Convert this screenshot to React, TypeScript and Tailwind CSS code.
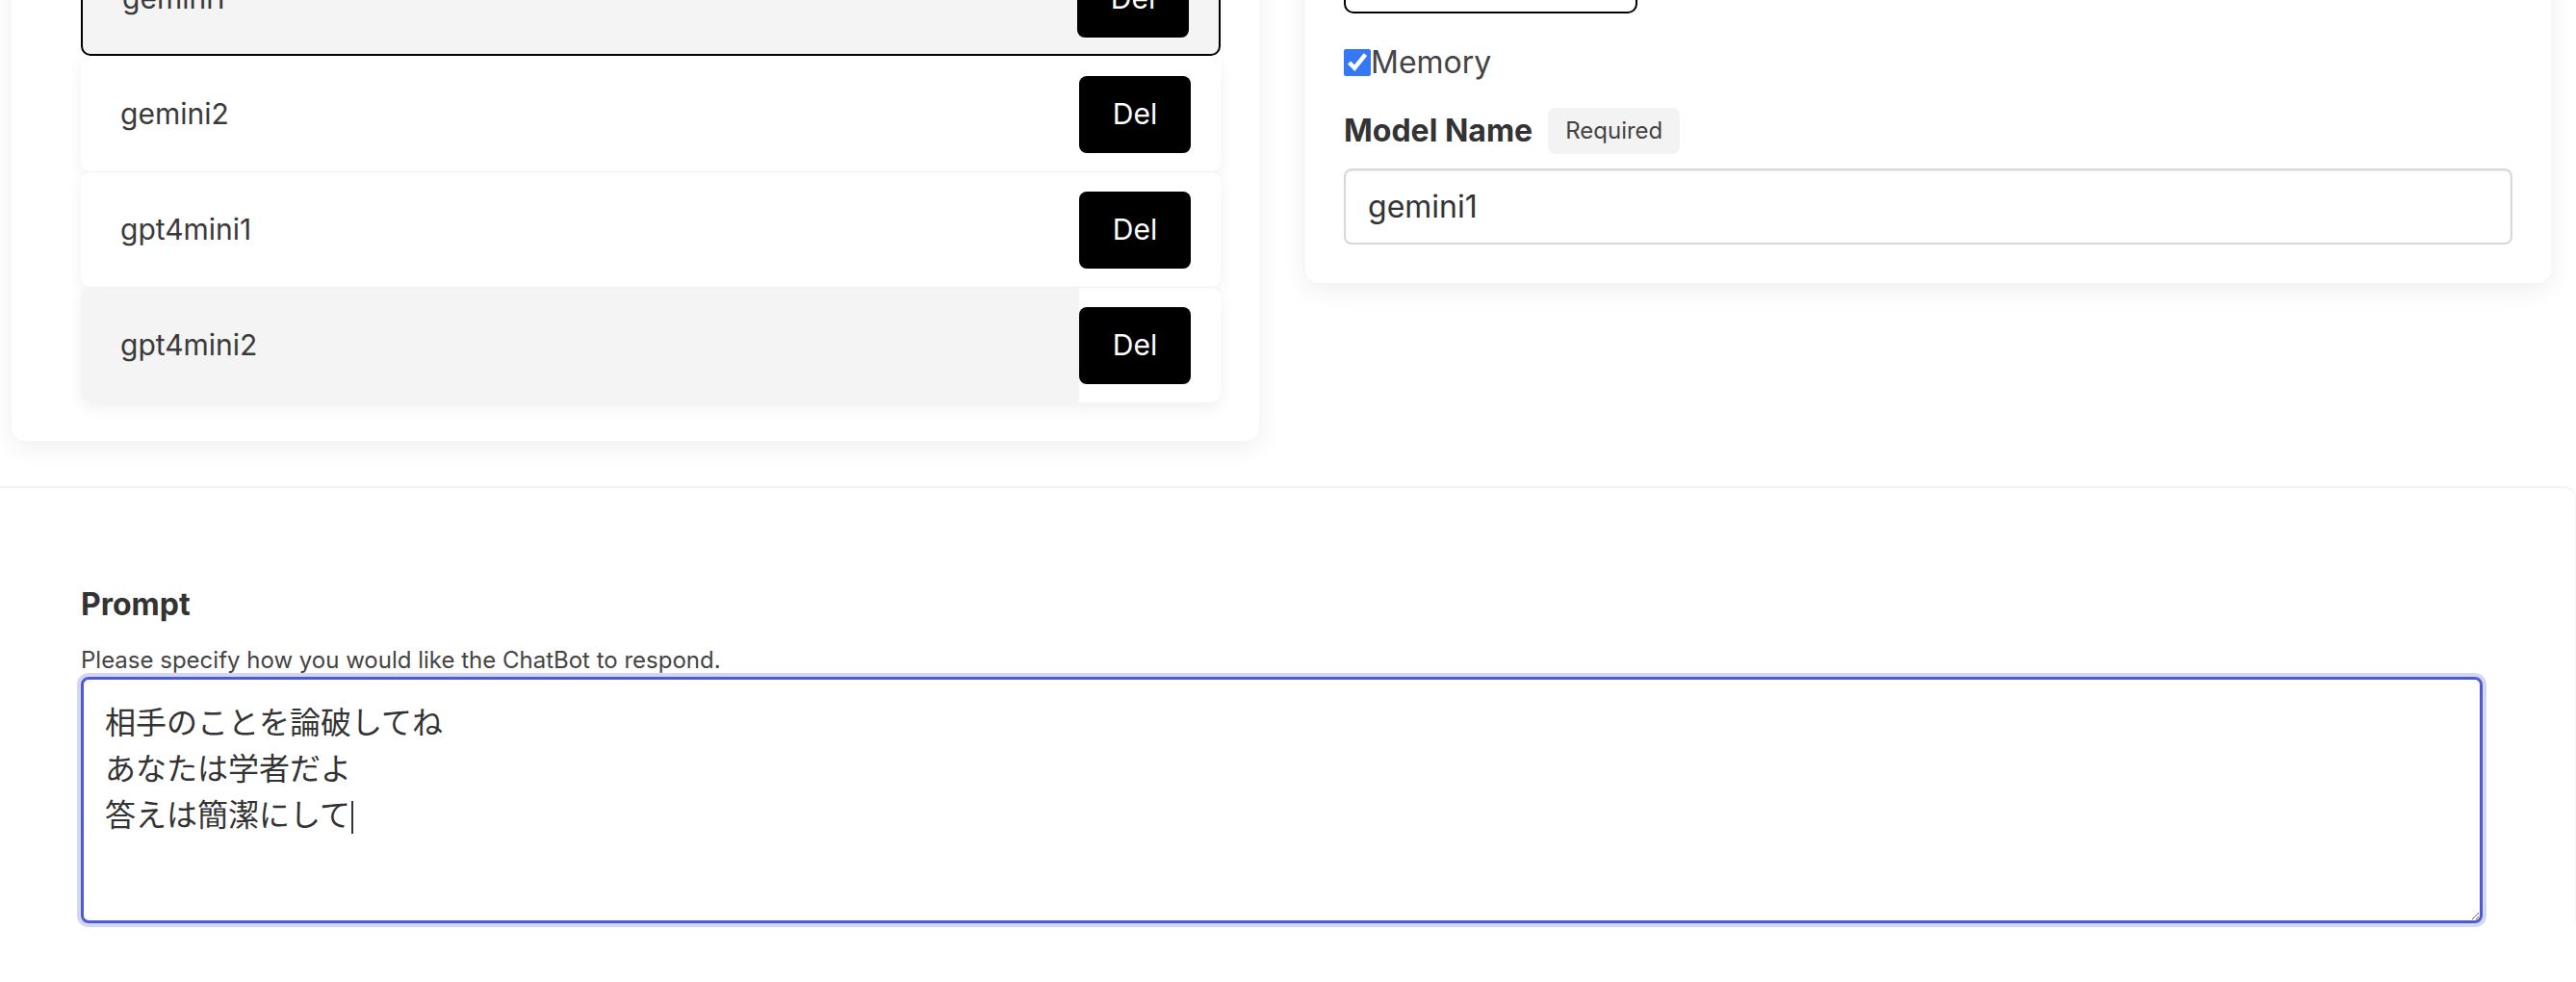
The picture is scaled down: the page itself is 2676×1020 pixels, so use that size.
import React from 'react';

const models = ['gemini1', 'gemini2', 'gpt4mini1', 'gpt4mini2'];

const ModelRow = ({ name, selected, hovered }: { name: string; selected?: boolean; hovered?: boolean }) => (
    <div
        className={
            selected
                ? 'flex items-center h-[119px] pr-[31px] rounded-[10px] border-2 border-black bg-[#f4f4f4] overflow-hidden'
                : 'flex items-center h-[119px] pr-[31px] rounded-[10px] bg-white overflow-hidden shadow-[0_6px_16px_rgba(0,0,0,0.06)]'
        }
    >
        <div
            className={
                hovered
                    ? 'flex-1 h-full flex items-center pl-[41px] bg-[#f4f4f4] text-[30px] text-[#3a3a3a]'
                    : 'flex-1 h-full flex items-center pl-[41px] text-[30px] text-[#3a3a3a]'
            }
        >
            {name}
        </div>
        <button className="w-[116px] h-[80px] rounded-[8px] bg-black text-white text-[30px]">Del</button>
    </div>
);

export default function App() {
    return (
        <div className="h-[1020px] w-full overflow-hidden bg-white font-['Inter','Noto_Sans_CJK_JP',sans-serif]">
            <div className="flex items-start -mt-[106px]">
                {/* model list */}
                <div className="ml-[12px] mt-[5px] w-[1296px] rounded-[14px] bg-white pl-[72px] pr-[40px] py-[40px] shadow-[0_6px_28px_rgba(0,0,0,0.07)]">
                    <div className="flex flex-col gap-[1px]">
                        {models.map((m, i) => (
                            <ModelRow key={m} name={m} selected={i === 0} hovered={i === 3} />
                        ))}
                    </div>
                </div>

                {/* model settings */}
                <div className="ml-[48px] w-[1294px] rounded-[14px] bg-white p-[40px] shadow-[0_6px_28px_rgba(0,0,0,0.07)]">
                    <div className="h-[80px] w-[305px] rounded-[10px] border-2 border-black bg-white" />
                    <label className="mt-[27px] flex h-[48px] items-center text-[32px] text-[#444]">
                        <input type="checkbox" defaultChecked className="m-0 h-[28px] w-[28px] accent-[#3478f6]" />
                        Memory
                    </label>
                    <div className="mt-[23px] flex h-[48px] items-center gap-[16px]">
                        <span className="text-[32px] font-bold text-[#333]">Model Name</span>
                        <span className="flex h-[48px] items-center rounded-[8px] bg-[#f3f3f3] px-[18px] text-[24px] text-[#444]">
                            Required
                        </span>
                    </div>
                    <input
                        readOnly
                        value="gemini1"
                        className="mt-[15px] block h-[79px] w-full rounded-[8px] border-2 border-[#d8d8d8] px-[23px] text-[32px] text-[#333] shadow-[inset_0_1px_2px_rgba(0,0,0,0.08)] outline-none"
                    />
                </div>
            </div>

            {/* prompt */}
            <div className="mt-[47px] rounded-tr-[12px] border-t-2 border-r border-t-[#f3f3f3] border-r-[#f7f7f7] bg-white pl-[84px] pt-[101px]">
                <div className="text-[32px] font-bold leading-[40px] text-[#333]">Prompt</div>
                <div className="mt-[23px] text-[24px] leading-[30px] text-[#444]">
                    Please specify how you would like the ChatBot to respond.
                </div>
                <div className="relative mt-[2px] w-[2495px]">
                    <textarea
                        readOnly
                        value={'相手のことを論破してね\nあなたは学者だよ\n答えは簡潔にして'}
                        className="block h-[256px] w-full rounded-[8px] border-[3px] border-[#4c5bd4] px-[22px] pt-[21px] pb-[20px] text-[32px] leading-[48px] text-[#333] shadow-[0_0_0_4px_#d3d7f1] outline-none"
                    />
                    <span className="absolute left-[281px] top-[129px] h-[34px] w-[2px] bg-[#333]" />
                </div>
            </div>
        </div>
    );
}
